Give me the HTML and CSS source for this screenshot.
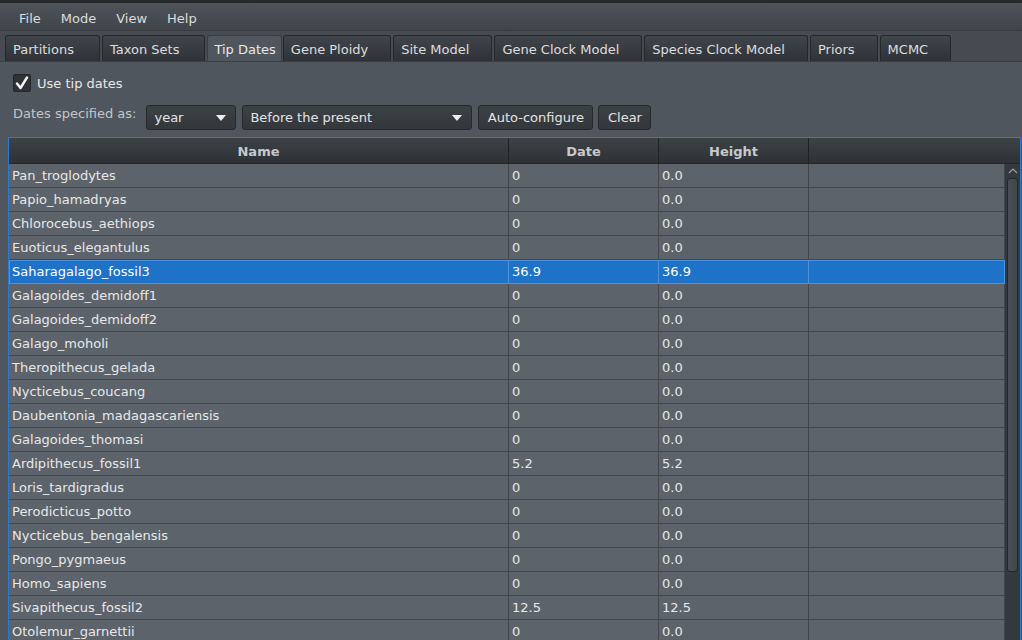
FILE: index.html
```html
<!DOCTYPE html>
<html>
<head>
<meta charset="utf-8">
<link rel="stylesheet" href="styles.css">
</head>
<body>
<div class="edge"></div>
<div class="menubar">
  <span class="menu">File</span>
  <span class="menu">Mode</span>
  <span class="menu">View</span>
  <span class="menu">Help</span>
</div>
<div class="tabs">
  <div class="tab">Partitions</div>
  <div class="tab">Taxon Sets</div>
  <div class="tab sel">Tip Dates</div>
  <div class="tab">Gene Ploidy</div>
  <div class="tab">Site Model</div>
  <div class="tab">Gene Clock Model</div>
  <div class="tab">Species Clock Model</div>
  <div class="tab">Priors</div>
  <div class="tab">MCMC</div>
</div>
<div class="panel">
  <label class="check">
    <span class="box"><svg width="14" height="14" viewBox="0 0 14 14"><path d="M2 7.5 L5.5 12 L12 1.5" fill="none" stroke="#f4f4f4" stroke-width="2.4" stroke-linecap="round" stroke-linejoin="round"/></svg></span>
    <span>Use tip dates</span>
  </label>
  <div class="dates">
    <span class="lbl">Dates specified as:</span>
    <div class="combo c-year"><span>year</span><span class="arrow"></span></div>
    <div class="combo c-before"><span>Before the present</span><span class="arrow"></span></div>
    <div class="btn b-auto">Auto-configure</div>
    <div class="btn b-clear">Clear</div>
  </div>
  <div class="table">
    <div class="thead">
      <div class="th c1">Name</div>
      <div class="th c2">Date</div>
      <div class="th c3">Height</div>
      <div class="th c4"></div>
    </div>
    <div class="tbody">
      <div class="rows">
        <div class="row"><div class="td c1">Pan_troglodytes</div><div class="td c2">0</div><div class="td c3">0.0</div><div class="td c4"></div></div>
        <div class="row"><div class="td c1">Papio_hamadryas</div><div class="td c2">0</div><div class="td c3">0.0</div><div class="td c4"></div></div>
        <div class="row"><div class="td c1">Chlorocebus_aethiops</div><div class="td c2">0</div><div class="td c3">0.0</div><div class="td c4"></div></div>
        <div class="row"><div class="td c1">Euoticus_elegantulus</div><div class="td c2">0</div><div class="td c3">0.0</div><div class="td c4"></div></div>
        <div class="row selected"><div class="td c1">Saharagalago_fossil3</div><div class="td c2">36.9</div><div class="td c3">36.9</div><div class="td c4"></div></div>
        <div class="row"><div class="td c1">Galagoides_demidoff1</div><div class="td c2">0</div><div class="td c3">0.0</div><div class="td c4"></div></div>
        <div class="row"><div class="td c1">Galagoides_demidoff2</div><div class="td c2">0</div><div class="td c3">0.0</div><div class="td c4"></div></div>
        <div class="row"><div class="td c1">Galago_moholi</div><div class="td c2">0</div><div class="td c3">0.0</div><div class="td c4"></div></div>
        <div class="row"><div class="td c1">Theropithecus_gelada</div><div class="td c2">0</div><div class="td c3">0.0</div><div class="td c4"></div></div>
        <div class="row"><div class="td c1">Nycticebus_coucang</div><div class="td c2">0</div><div class="td c3">0.0</div><div class="td c4"></div></div>
        <div class="row"><div class="td c1">Daubentonia_madagascariensis</div><div class="td c2">0</div><div class="td c3">0.0</div><div class="td c4"></div></div>
        <div class="row"><div class="td c1">Galagoides_thomasi</div><div class="td c2">0</div><div class="td c3">0.0</div><div class="td c4"></div></div>
        <div class="row"><div class="td c1">Ardipithecus_fossil1</div><div class="td c2">5.2</div><div class="td c3">5.2</div><div class="td c4"></div></div>
        <div class="row"><div class="td c1">Loris_tardigradus</div><div class="td c2">0</div><div class="td c3">0.0</div><div class="td c4"></div></div>
        <div class="row"><div class="td c1">Perodicticus_potto</div><div class="td c2">0</div><div class="td c3">0.0</div><div class="td c4"></div></div>
        <div class="row"><div class="td c1">Nycticebus_bengalensis</div><div class="td c2">0</div><div class="td c3">0.0</div><div class="td c4"></div></div>
        <div class="row"><div class="td c1">Pongo_pygmaeus</div><div class="td c2">0</div><div class="td c3">0.0</div><div class="td c4"></div></div>
        <div class="row"><div class="td c1">Homo_sapiens</div><div class="td c2">0</div><div class="td c3">0.0</div><div class="td c4"></div></div>
        <div class="row"><div class="td c1">Sivapithecus_fossil2</div><div class="td c2">12.5</div><div class="td c3">12.5</div><div class="td c4"></div></div>
        <div class="row"><div class="td c1">Otolemur_garnettii</div><div class="td c2">0</div><div class="td c3">0.0</div><div class="td c4"></div></div>
      </div>
      <div class="scrollbar">
        <div class="up"><svg width="12" height="8" viewBox="0 0 12 8"><path d="M2 6 L6 2 L10 6" fill="none" stroke="#9aa0a6" stroke-width="1.2"/></svg></div>
        <div class="thumb"></div>
      </div>
    </div>
  </div>
</div>
</body>
</html>
```

FILE: styles.css
```css
* { box-sizing: border-box; }
html, body {
  margin: 0;
  padding: 0;
  width: 1022px;
  height: 640px;
  overflow: hidden;
  background: #50565d;
  font-family: "DejaVu Sans", "Noto Sans", sans-serif;
  font-size: 13px;
  color: #e4e4e4;
}
.edge {
  height: 3px;
  background: #26292c;
}
.menubar {
  height: 28px;
  display: flex;
  align-items: center;
  padding: 3px 0 0 9px;
  background: linear-gradient(#4d5359, #40454b);
  border-bottom: 1px solid #393d42;
}
.menu {
  padding: 0 10px;
  color: #dcdcdc;
}
.tabs {
  display: flex;
  align-items: flex-end;
  gap: 2px;
  height: 31px;
  padding-left: 5px;
  background: #464b51;
  border-bottom: 1px solid #3a3f44;
}
.tab {
  height: 26px;
  line-height: 27px;
  padding: 0 22px 0 7px;
  color: #dedede;
  background: linear-gradient(#40454b, #2f3338);
  border: 1px solid #25282b;
  border-bottom: none;
  border-radius: 3px 3px 0 0;
  white-space: nowrap;
}
.tab:first-child { padding-right: 25px; }
.tab:nth-child(2) { padding-right: 25px; }
.tab.sel {
  padding: 0 5px 0 6px;
  margin-right: -1px;
  background: #50565d;
  color: #e8e8e8;
  border-color: #3a3e43;
}
.panel {
  padding: 11px 0 0 0;
}
.check {
  display: flex;
  align-items: center;
  gap: 6px;
  margin-left: 13px;
  height: 20px;
  color: #e8e8e8;
}
.box {
  width: 18px;
  height: 18px;
  border: 1px solid #24272a;
  border-radius: 2px;
  background: #2f3337;
  display: flex;
  align-items: center;
  justify-content: center;
}
.dates {
  display: flex;
  align-items: center;
  height: 24px;
  margin-top: 12px;
  padding-left: 13px;
}
.lbl {
  color: #c3c6c9;
  margin-right: 10px;
  margin-top: -8px;
}
.combo, .btn {
  height: 25px;
  border: 1px solid #26292c;
  border-radius: 3px;
  background: linear-gradient(#3c4146, #33373c);
  display: flex;
  align-items: center;
  color: #e4e4e4;
}
.combo {
  justify-content: space-between;
  padding: 1px 9px 0 7px;
  margin-right: 6px;
}
.c-year { width: 90px; }
.c-before { width: 230px; }
.arrow {
  width: 0;
  height: 0;
  border-left: 5px solid transparent;
  border-right: 5px solid transparent;
  border-top: 6px solid #eeeeee;
}
.btn {
  justify-content: center;
  margin-right: 5px;
}
.b-auto { width: 115px; }
.b-clear { width: 53px; }
.table {
  margin: 8px 1px 0 8px;
  border: 1px solid #2a7bd0;
  border-bottom: none;
  height: 504px;
  overflow: hidden;
}
.thead {
  display: flex;
  height: 26px;
  background: linear-gradient(#3d4247, #2e3236);
  border-bottom: 1px solid #23262a;
}
.th {
  font-weight: bold;
  color: #c7c9cb;
  text-align: center;
  line-height: 27px;
  border-right: 1px solid #1f2225;
}
.c1 { width: 500px; }
.c2 { width: 150px; }
.c3 { width: 150px; }
.th.c4 { flex: 1; border-right: none; }
.td.c4 { width: 196px; }
.tbody {
  display: flex;
}
.rows {
  width: 996px;
}
.row {
  display: flex;
  height: 24px;
  background: #5c636b;
  border-bottom: 1px solid #41464c;
}
.td {
  line-height: 23px;
  padding-left: 3px;
  color: #e8e8e8;
  border-right: 1px solid #41464c;
  white-space: nowrap;
}
.row.selected {
  background: #1e72c8;
  outline: 1px solid #4d92dc;
  outline-offset: -1px;
  border-bottom-color: #1e72c8;
}
.row.selected .td {
  border-right-color: #4d92dc;
  color: #ffffff;
}
.scrollbar {
  width: 15px;
  background: #34393e;
  display: flex;
  flex-direction: column;
  align-items: center;
}
.up {
  height: 14px;
  display: flex;
  align-items: center;
  justify-content: center;
}
.thumb {
  width: 11px;
  height: 394px;
  border: 1px solid #23272a;
  border-radius: 3px;
  background: linear-gradient(90deg, #4a4f55, #41464c);
}
```
